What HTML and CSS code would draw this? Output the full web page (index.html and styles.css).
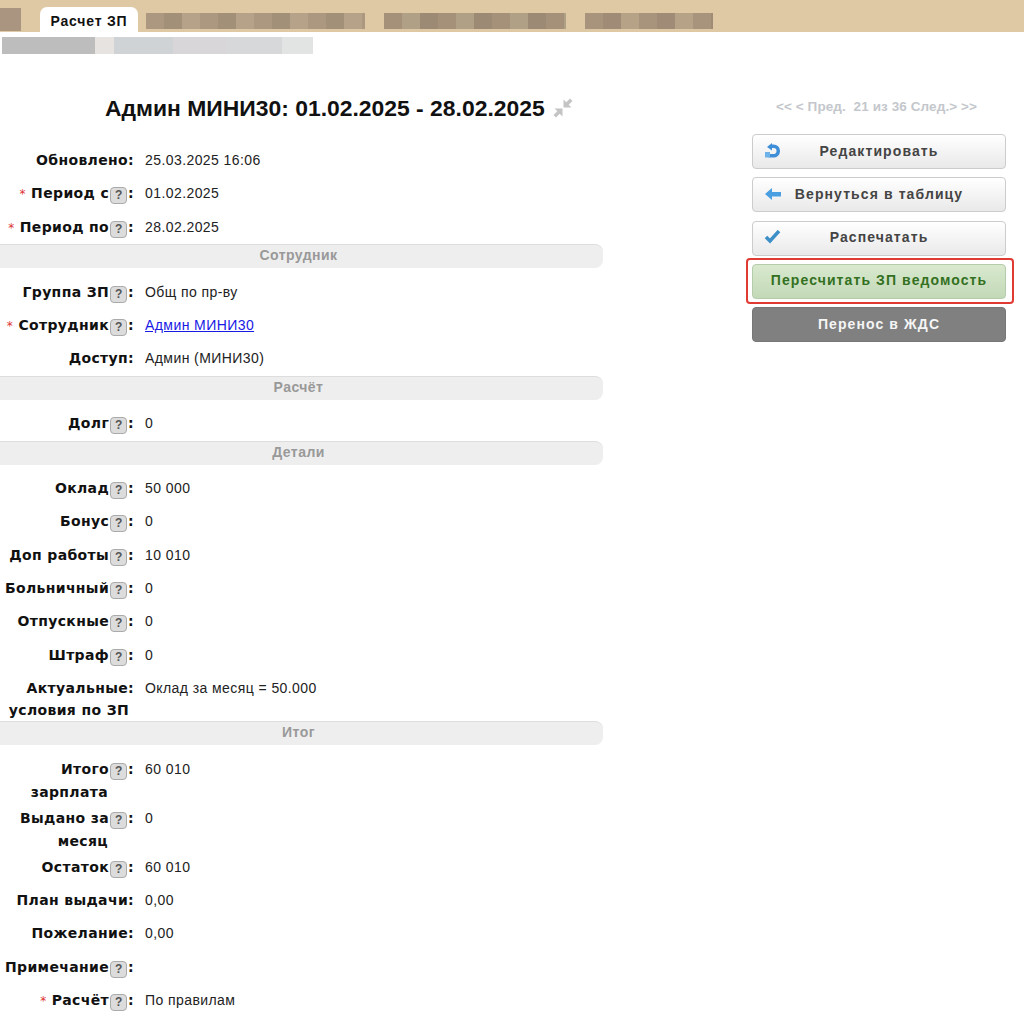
FILE: index.html
```html
<!DOCTYPE html>
<html lang="ru">
<head>
<meta charset="utf-8">
<title>Расчет ЗП</title>
<link rel="stylesheet" href="styles.css">
</head>
<body>
<header class="topbar">
  <div class="blur b-a"></div>
  <div class="tab">Расчет ЗП</div>
  <div class="blur b-b"></div>
  <div class="blur b-c"></div>
  <div class="blur b-d"></div>
</header>
<div class="crumbs"><div class="crumb-blur"></div></div>
<div class="content">
  <main class="main">
    <h1 class="title">Админ МИНИ30: 01.02.2025 - 28.02.2025
      <svg class="pin" width="20" height="20" viewBox="0 0 20 20"><path fill="#c4c4c4" d="M10.500 1.500v8h8l-2.800-2.800L19.500 3 17 .5l-3.700 3.800zM9.500 18.500v-8h-8l2.800 2.800L.5 17 3 19.500l3.700-3.800z"/></svg>
    </h1>
    <div class="row"><div class="label">Обновлено:</div><div class="value">25.03.2025 16:06</div></div>
    <div class="row"><div class="label"><i>*</i> Период с<b class="q">?</b>:</div><div class="value">01.02.2025</div></div>
    <div class="row"><div class="label"><i>*</i> Период по<b class="q">?</b>:</div><div class="value">28.02.2025</div></div>
    <div class="section">Сотрудник</div>
    <div class="row"><div class="label">Группа ЗП<b class="q">?</b>:</div><div class="value">Общ по пр-ву</div></div>
    <div class="row"><div class="label"><i>*</i> Сотрудник<b class="q">?</b>:</div><div class="value"><a href="#">Админ МИНИ30</a></div></div>
    <div class="row"><div class="label">Доступ:</div><div class="value">Админ (МИНИ30)</div></div>
    <div class="section">Расчёт</div>
    <div class="row"><div class="label">Долг<b class="q">?</b>:</div><div class="value">0</div></div>
    <div class="section">Детали</div>
    <div class="row"><div class="label">Оклад<b class="q">?</b>:</div><div class="value">50 000</div></div>
    <div class="row"><div class="label">Бонус<b class="q">?</b>:</div><div class="value">0</div></div>
    <div class="row"><div class="label">Доп работы<b class="q">?</b>:</div><div class="value">10 010</div></div>
    <div class="row"><div class="label">Больничный<b class="q">?</b>:</div><div class="value">0</div></div>
    <div class="row"><div class="label">Отпускные<b class="q">?</b>:</div><div class="value">0</div></div>
    <div class="row"><div class="label">Штраф<b class="q">?</b>:</div><div class="value">0</div></div>
    <div class="row tall"><div class="label">Актуальные:<br><span class="second near">условия по ЗП</span></div><div class="value">Оклад за месяц = 50.000</div></div>
    <div class="section">Итог</div>
    <div class="row tall"><div class="label">Итого<b class="q">?</b>:<br><span class="second">зарплата</span></div><div class="value">60 010</div></div>
    <div class="row tall"><div class="label">Выдано за<b class="q">?</b>:<br><span class="second">месяц</span></div><div class="value">0</div></div>
    <div class="row"><div class="label">Остаток<b class="q">?</b>:</div><div class="value">60 010</div></div>
    <div class="row"><div class="label">План выдачи:</div><div class="value">0,00</div></div>
    <div class="row"><div class="label">Пожелание:</div><div class="value">0,00</div></div>
    <div class="row"><div class="label">Примечание<b class="q">?</b>:</div><div class="value"></div></div>
    <div class="row"><div class="label"><i>*</i> Расчёт<b class="q">?</b>:</div><div class="value">По правилам</div></div>
  </main>
  <aside class="side">
    <div class="nav">&lt;&lt; &lt; Пред.&nbsp; 21 из 36 След.&gt; &gt;&gt;</div>
    <a class="btn" href="#">
      <svg class="ico" width="18" height="16" viewBox="0 0 18 16"><path fill="none" stroke="#3f8fd8" stroke-width="3.500" d="M8 3.200h1.500a4.800 4.800 0 0 1 0 9.600H6a3.500 3.500 0 0 1-3-2"/><path fill="#3f8fd8" d="M3 4 8 0v7.500z"/><path fill="#6fb2ea" d="M1 9h5v5.500H1z"/></svg>
      Редактировать</a>
    <a class="btn" href="#">
      <svg class="ico" width="18" height="16" viewBox="0 0 18 16"><path fill="#4a9fe0" d="M1 8l7-6v4h9v4.500H8V14z"/></svg>
      Вернуться в таблицу</a>
    <a class="btn" href="#">
      <svg class="ico" width="18" height="16" viewBox="0 0 18 16"><path fill="none" stroke="#3d8fc8" stroke-width="3.500" d="M2 7l4 4 9-10"/></svg>
      Распечатать</a>
    <a class="btn green" href="#">Пересчитать ЗП ведомость</a>
    <a class="btn gray" href="#">Перенос в ЖДС</a>
  </aside>
</div>
</body>
</html>
```
FILE: styles.css
```css
html, body { margin: 0; padding: 0; height: 1015px; overflow: hidden; background: #fff; }
body { font-family: "Liberation Sans", Arial, sans-serif; font-size: 14px; color: #222; }

.topbar { height: 32px; background: #dfc8a4; display: flex; align-items: flex-end; position: relative; }
.tab { width: 98px; height: 25px; margin: 0 8px 0 19px; background: #fff; border-radius: 7px 7px 0 0; font-weight: bold; font-size: 14px; letter-spacing: .8px; color: #111; text-align: center; line-height: 29px; }
.blur { height: 21px; margin-bottom: 2px; background: #ab9680; }
.b-a { width: 21px; height: 23px; margin-bottom: 1px; background: #a99580; }
.b-b { width: 219px; margin-right: 19px; height: 16px; margin-bottom: 3px; background: repeating-linear-gradient(90deg, #ac9780 0 18px, #a39078 18px 36px, #b5a288 36px 54px); }
.b-c { width: 182px; margin-right: 19px; height: 16px; margin-bottom: 3px; background: repeating-linear-gradient(90deg, #a59079 0 18px, #b0a085 18px 36px, #9d8a74 36px 54px); }
.b-d { width: 128px; height: 16px; margin-bottom: 3px; background: repeating-linear-gradient(90deg, #a8937c 0 18px, #9f8b76 18px 36px, #b5a287 36px 54px); }

.crumbs { height: 48px; padding-top: 5px; }
.crumb-blur { width: 311px; height: 17px; margin-left: 2px; background: linear-gradient(90deg, #bdbdbd 0 30%, #e6e3e1 30% 36%, #cfd3d6 36% 55%, #d8d6d8 55% 72%, #d6d8da 72% 90%, #e2e4e4 90%); }

.content { display: flex; align-items: flex-start; }
.main { width: 603px; flex: none; }
.title { margin: 9px 0 28px 105px; font-size: 22.900px; line-height: 28px; font-weight: bold; color: #111; white-space: nowrap; display: flex; align-items: center; gap: 8px; }
.pin { flex: none; margin-top: -1px; }

.row { display: flex; align-items: flex-start; height: 33.300px; }
.row.tall { height: 49px; }
.label { width: 134px; flex: none; text-align: right; font-family: "DejaVu Sans", Verdana, sans-serif; font-weight: bold; font-size: 14px; letter-spacing: .35px; line-height: 20px; color: #111; white-space: nowrap; }
.label i { color: #d33; font-weight: normal; font-style: normal; font-size: 12px; }
.second { display: inline-block; margin-top: 2px; margin-right: 26px; }
.second.near { margin-right: 5px; }
.value { margin-left: 11px; font-size: 14px; letter-spacing: .42px; line-height: 20px; color: #222; }
.value a { color: #1a1ae6; }
.q { display: inline-block; width: 15px; height: 15px; margin: 0 1px 0 1px; border: 1px solid #aaa; border-radius: 4px; background: #dcdcdc; color: #555; font-family: "Liberation Sans", Arial, sans-serif; font-size: 12px; font-weight: bold; line-height: 15px; letter-spacing: 0; text-align: center; vertical-align: -1px; }

.section { height: 24px; margin: -5.500px 0 13.200px; padding-right: 6px; background: #eeeeee; border-top: 1px solid #ddd; box-sizing: border-box; border-radius: 0 8px 8px 0; text-align: center; font-weight: bold; font-size: 14px; letter-spacing: .45px; line-height: 21px; color: #999; }

.side { width: 254px; margin-left: 149px; flex: none; display: flex; flex-direction: column; }
.nav { text-align: center; padding-right: 5px; color: #c4c7cc; font-weight: bold; font-size: 13.500px; letter-spacing: .1px; line-height: 16px; margin: 14px 0 19px; }
.btn { position: relative; display: flex; align-items: center; justify-content: center; height: 35px; margin-bottom: 8.300px; padding-bottom: 2px; box-sizing: border-box; border: 1px solid #ccc; border-radius: 4px; background: linear-gradient(#fff, #e9e9e9); color: #444; font-weight: bold; font-size: 14px; letter-spacing: 1.1px; text-decoration: none; }
.ico { position: absolute; left: 11px; top: 8px; }
.green { background: linear-gradient(#d9e9ce, #c2d9b7); border-color: #b5ccaa; color: #33701f; }
.green::after { content: ""; position: absolute; left: -7px; right: -9px; top: -7px; bottom: -6px; border: 2px solid #e03a33; border-radius: 4px; }
.gray { background: #808080; border-color: #777; color: #f5f5f5; }
```
